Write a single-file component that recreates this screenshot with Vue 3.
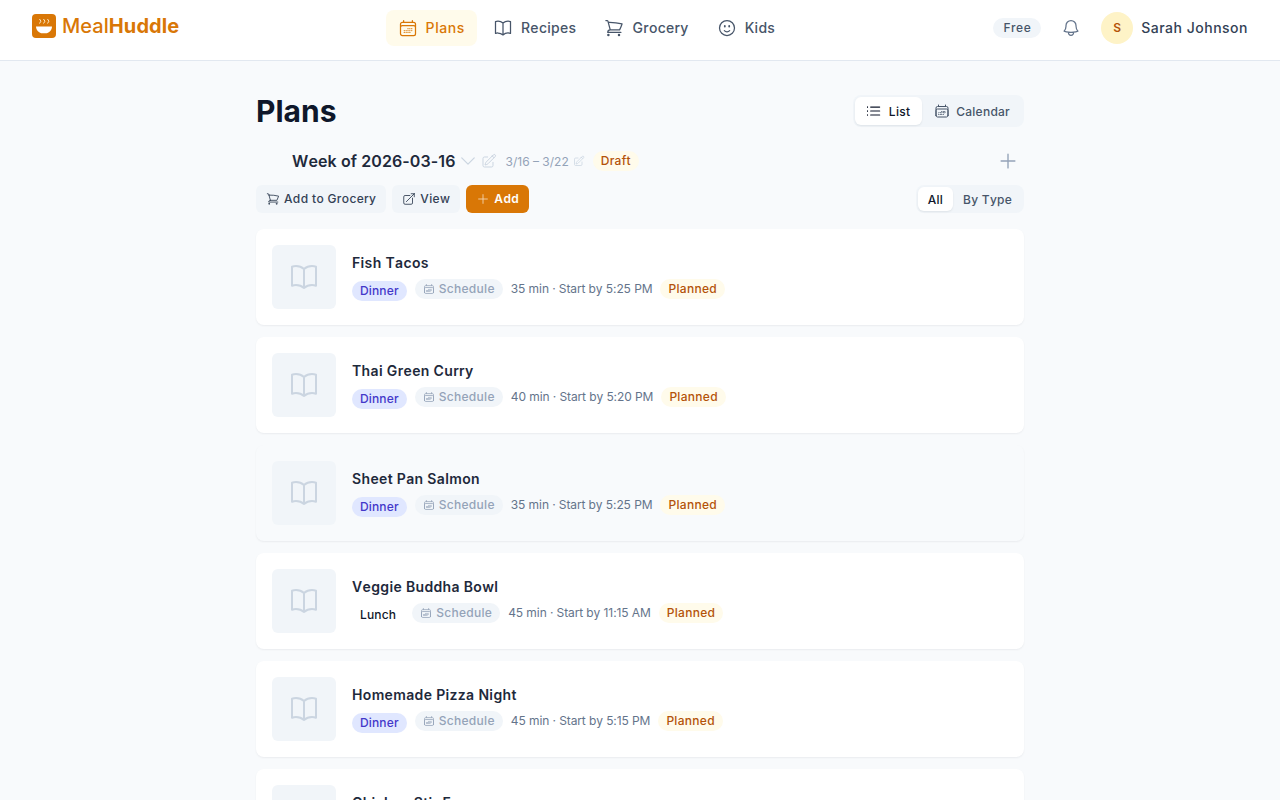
<script setup>
const nav = [
  { label: 'Plans', icon: 'calendar', active: true },
  { label: 'Recipes', icon: 'book' },
  { label: 'Grocery', icon: 'cart' },
  { label: 'Kids', icon: 'smile' }
]

const paths = {
  calendar: 'M6.75 3v2.25M17.25 3v2.25M3 18.75V7.5a2.25 2.25 0 0 1 2.25-2.25h13.5A2.25 2.25 0 0 1 21 7.5v11.25m-18 0A2.25 2.25 0 0 0 5.25 21h13.5A2.25 2.25 0 0 0 21 18.75m-18 0v-7.5A2.25 2.25 0 0 1 5.25 9h13.5A2.25 2.25 0 0 1 21 11.25v7.5m-9-6h.008v.008H12v-.008ZM12 15h.008v.008H12V15Zm0 2.25h.008v.008H12v-.008ZM9.75 15h.008v.008H9.75V15Zm0 2.25h.008v.008H9.75v-.008ZM7.5 15h.008v.008H7.5V15Zm0 2.25h.008v.008H7.5v-.008Zm6.75-4.5h.008v.008h-.008v-.008Zm0 2.25h.008v.008h-.008V15Zm0 2.25h.008v.008h-.008v-.008Zm2.25-4.5h.008v.008H16.5v-.008Zm0 2.25h.008v.008H16.5V15Z',
  book: 'M12 6.042A8.967 8.967 0 0 0 6 3.75c-1.052 0-2.062.18-3 .512v14.25A8.987 8.987 0 0 1 6 18c2.305 0 4.408.867 6 2.292m0-14.25a8.966 8.966 0 0 1 6-2.292c1.052 0 2.062.18 3 .512v14.25A8.987 8.987 0 0 0 18 18a8.967 8.967 0 0 0-6 2.292m0-14.25v14.25',
  cart: 'M2.25 3h1.386c.51 0 .955.343 1.087.835l.383 1.437M7.5 14.25a3 3 0 0 0-3 3h15.75m-12.75-3h11.218c1.121-2.3 2.1-4.684 2.924-7.138a60.114 60.114 0 0 0-16.536-1.84M7.5 14.25 5.106 5.272M6 20.25a.75.75 0 1 1-1.5 0 .75.75 0 0 1 1.5 0Zm12.75 0a.75.75 0 1 1-1.5 0 .75.75 0 0 1 1.5 0Z',
  smile: 'M15.182 15.182a4.5 4.5 0 0 1-6.364 0M21 12a9 9 0 1 1-18 0 9 9 0 0 1 18 0ZM9.75 9.75c0 .414-.168.75-.375.75S9 10.164 9 9.75 9.168 9 9.375 9s.375.336.375.75Zm-.375 0h.008v.015h-.008V9.75Zm5.625 0c0 .414-.168.75-.375.75s-.375-.336-.375-.75.168-.75.375-.75.375.336.375.75Zm-.375 0h.008v.015h-.008V9.75Z',
  bell: 'M14.857 17.082a23.848 23.848 0 0 0 5.454-1.31A8.967 8.967 0 0 1 18 9.75V9A6 6 0 0 0 6 9v.75a8.967 8.967 0 0 1-2.312 6.022c1.733.64 3.56 1.085 5.455 1.31m5.714 0a24.255 24.255 0 0 1-5.714 0m5.714 0a3 3 0 1 1-5.714 0',
  pencil: 'm16.862 4.487 1.687-1.688a1.875 1.875 0 1 1 2.652 2.652L10.582 16.07a4.5 4.5 0 0 1-1.897 1.13L6 18l.8-2.685a4.5 4.5 0 0 1 1.13-1.897l8.932-8.931Zm0 0L19.5 7.125M18 14v4.75A2.25 2.25 0 0 1 15.75 21H5.25A2.25 2.25 0 0 1 3 18.75V8.25A2.25 2.25 0 0 1 5.25 6H10',
  external: 'M13.5 6H5.25A2.25 2.25 0 0 0 3 8.25v10.5A2.25 2.25 0 0 0 5.25 21h10.5A2.25 2.25 0 0 0 18 18.75V10.5m-10.5 6L21 3m0 0h-5.25M21 3v5.25',
  plus: 'M12 4.5v15m7.5-7.5h-15',
  list: 'M8.25 6.75h12M8.25 12h12m-12 5.25h12M3.75 6.75h.007v.008H3.75V6.75Zm.375 0a.375.375 0 1 1-.75 0 .375.375 0 0 1 .75 0ZM3.75 12h.007v.008H3.75V12Zm.375 0a.375.375 0 1 1-.75 0 .375.375 0 0 1 .75 0Zm-.375 5.25h.007v.008H3.75v-.008Zm.375 0a.375.375 0 1 1-.75 0 .375.375 0 0 1 .75 0Z',
  chevron: 'm19.5 8.25-7.5 7.5-7.5-7.5'
}

const meals = [
  { name: 'Fish Tacos', type: 'Dinner', time: '35 min · Start by 5:25 PM' },
  { name: 'Thai Green Curry', type: 'Dinner', time: '40 min · Start by 5:20 PM' },
  { name: 'Sheet Pan Salmon', type: 'Dinner', time: '35 min · Start by 5:25 PM', muted: true },
  { name: 'Veggie Buddha Bowl', type: 'Lunch', time: '45 min · Start by 11:15 AM' },
  { name: 'Homemade Pizza Night', type: 'Dinner', time: '45 min · Start by 5:15 PM' },
  { name: 'Chicken Stir Fry', type: 'Dinner', time: '30 min · Start by 5:30 PM' }
]
</script>

<template>
  <div class="page">
    <header class="topbar">
      <div class="brand">
        <span class="logo">
          <svg viewBox="0 0 24 24" width="24" height="24">
            <path d="M4 12.5h16c0 3.6-3 6.8-6.5 6.8h-3C7 19.3 4 16.1 4 12.5Z" fill="#fff" />
            <path d="M7.5 5l1.4 2.2L7.5 9.5M11.5 5l1.4 2.2-1.4 2.3M15.5 5l1.4 2.2-1.4 2.3" fill="none" stroke="#fde9c4" stroke-width="1" />
          </svg>
        </span>
        <span class="brand-name">Meal<b>Huddle</b></span>
      </div>
      <nav class="nav">
        <a v-for="item in nav" :key="item.label" class="nav-item" :class="{ active: item.active }">
          <svg class="ico i20" viewBox="0 0 24 24"><path :d="paths[item.icon]" /></svg>
          {{ item.label }}
        </a>
      </nav>
      <div class="account">
        <span class="plan">Free</span>
        <svg class="ico i20 bell" viewBox="0 0 24 24"><path :d="paths.bell" /></svg>
        <span class="avatar">S</span>
        <span class="user">Sarah Johnson</span>
      </div>
    </header>

    <main class="content">
      <div class="title-row">
        <h1>Plans</h1>
        <div class="segment view-seg">
          <button class="seg-btn on">
            <svg class="ico i16" viewBox="3.4 1.3 21.3 21.3"><path :d="paths.list" /></svg>List
          </button>
          <button class="seg-btn">
            <svg class="ico i16" viewBox="0 0 24 24"><path :d="paths.calendar" /></svg>Calendar
          </button>
        </div>
      </div>

      <div class="week-row">
        <h2>Week of 2026-03-16</h2>
        <svg class="ico chev" viewBox="0 0 24 24"><path :d="paths.chevron" /></svg>
        <svg class="ico pen" viewBox="0 0 24 24"><path :d="paths.pencil" /></svg>
        <span class="range">3/16 – 3/22</span>
        <svg class="ico pen-sm" viewBox="0 0 24 24"><path :d="paths.pencil" /></svg>
        <span class="pill amber draft">Draft</span>
        <svg class="ico week-add" viewBox="0 0 24 24"><path :d="paths.plus" /></svg>
      </div>

      <div class="action-row">
        <button class="btn">
          <svg class="ico i14" viewBox="0 0 24 24"><path :d="paths.cart" /></svg>Add to Grocery
        </button>
        <button class="btn">
          <svg class="ico i14" viewBox="0 0 24 24"><path :d="paths.external" /></svg>View
        </button>
        <button class="btn primary">
          <svg class="ico i14" viewBox="0 0 24 24"><path :d="paths.plus" /></svg>Add
        </button>
        <div class="segment type-seg">
          <button class="seg-btn on">All</button>
          <button class="seg-btn">By Type</button>
        </div>
      </div>

      <div class="meals">
        <article v-for="meal in meals" :key="meal.name" class="card" :class="{ muted: meal.muted }">
          <div class="thumb">
            <svg class="ico" viewBox="0 0 24 24" width="32" height="32"><path :d="paths.book" /></svg>
          </div>
          <div class="info">
            <h3>{{ meal.name }}</h3>
            <div class="meta">
              <span class="type" :class="meal.type.toLowerCase()">{{ meal.type }}</span>
              <span class="pill schedule">
                <svg class="ico i12" viewBox="0 0 24 24"><path :d="paths.calendar" /></svg>Schedule
              </span>
              <span class="time">{{ meal.time }}</span>
              <span class="pill amber">Planned</span>
            </div>
          </div>
        </article>
      </div>
    </main>
  </div>
</template>

<style>
html, body {
  margin: 0;
  background: #f8fafc;
  overflow: hidden;
}
</style>

<style scoped>
* {
  box-sizing: border-box;
}

.page {
  height: 800px;
  overflow: hidden;
  font-family: Inter, "Liberation Sans", sans-serif;
  font-kerning: none;
  color: #0f172a;
  background: #f8fafc;
}

.ico {
  display: block;
  flex: none;
  fill: none;
  stroke: currentColor;
  stroke-width: 1.5;
  stroke-linecap: round;
  stroke-linejoin: round;
}
.i20 { width: 20px; height: 20px; }
.i16 { width: 16px; height: 16px; }
.i14 { width: 14px; height: 14px; }
.i12 { width: 12px; height: 12px; }

.topbar {
  height: 61px;
  padding: 0 32px 5px;
  display: flex;
  justify-content: space-between;
  align-items: center;
  background: #fff;
  border-bottom: 1px solid #e2e8f0;
}

.brand {
  display: flex;
  align-items: center;
  gap: 6px;
  margin-top: -4px;
}
.logo {
  width: 24px;
  height: 24px;
  border-radius: 4px;
  background: #d97706;
}
.brand-name {
  font-size: 20px;
  line-height: 28px;
  font-weight: 500;
  letter-spacing: 0.1px;
  color: #d97706;
}
.brand-name b {
  font-weight: 700;
}

.nav {
  display: flex;
  gap: 4px;
}
.nav-item {
  height: 36px;
  padding: 0 12px;
  display: flex;
  align-items: center;
  gap: 8px;
  border-radius: 8px;
  font-size: 14px;
  font-weight: 500;
  letter-spacing: 0.3px;
  color: #475569;
}
.nav-item.active {
  background: #fffbeb;
  color: #d97706;
  letter-spacing: 0.6px;
}

.account {
  display: flex;
  align-items: center;
  justify-content: flex-end;
}
.plan {
  padding: 0 10px;
  height: 20px;
  line-height: 20px;
  border-radius: 10px;
  background: #f1f5f9;
  font-size: 12px;
  font-weight: 500;
  letter-spacing: 0.5px;
  color: #475569;
}
.bell {
  margin-left: 20px;
  color: #64748b;
}
.avatar {
  margin-left: 20px;
  width: 32px;
  height: 32px;
  border-radius: 50%;
  background: #fef3c7;
  color: #b45309;
  font-size: 12px;
  font-weight: 600;
  display: flex;
  align-items: center;
  justify-content: center;
}
.user {
  margin-left: 8px;
  font-size: 14px;
  font-weight: 500;
  letter-spacing: 0.5px;
  color: #334155;
}

.content {
  width: 768px;
  margin: 0 auto;
  padding-top: 32px;
}

.title-row {
  display: flex;
  align-items: center;
  justify-content: space-between;
  height: 36px;
}
h1 {
  margin: 0;
  font-size: 30px;
  line-height: 36px;
  font-weight: 700;
}

.segment {
  display: flex;
  padding: 2px;
  border-radius: 8px;
  background: #f1f5f9;
}
.seg-btn {
  border: 0;
  background: none;
  font: inherit;
  font-size: 12px;
  font-weight: 500;
  letter-spacing: 0.25px;
  color: #475569;
  display: flex;
  align-items: center;
  border-radius: 6px;
}
.seg-btn.on {
  background: #fff;
  color: #0f172a;
  box-shadow: 0 1px 2px rgba(15, 23, 42, 0.08);
}
.view-seg .seg-btn {
  height: 28px;
  padding: 0 12px;
  gap: 6px;
}
.type-seg {
  margin-left: auto;
}
.type-seg .seg-btn {
  height: 24px;
  padding: 0 10px;
}

.week-row {
  margin-top: 20px;
  height: 24px;
  padding-left: 36px;
  display: flex;
  align-items: center;
}
h2 {
  margin: 0;
  font-size: 16px;
  line-height: 24px;
  font-weight: 600;
  letter-spacing: 0.1px;
  color: #1e293b;
}
.chev {
  width: 20px;
  height: 20px;
  margin-left: 2px;
  color: #cbd5e1;
}
.pen {
  width: 16px;
  height: 16px;
  margin-left: 3px;
  color: #cbd5e1;
}
.range {
  margin-left: 9px;
  font-size: 12px;
  color: #94a3b8;
}
.pen-sm {
  width: 12px;
  height: 12px;
  margin-left: 4px;
  color: #cbd5e1;
}
.week-add {
  width: 22px;
  height: 22px;
  margin-left: auto;
  margin-right: 5px;
  color: #94a3b8;
}

.pill {
  height: 20px;
  line-height: 20px;
  padding: 0 8px;
  border-radius: 10px;
  font-size: 12px;
  font-weight: 500;
  letter-spacing: 0.3px;
}
.amber {
  background: #fffbeb;
  color: #b45309;
}
.draft {
  margin-left: 8px;
}

.action-row {
  margin-top: 12px;
  display: flex;
  align-items: center;
  gap: 6px;
}
.btn {
  height: 28px;
  padding: 0 10px 1px;
  display: flex;
  align-items: center;
  gap: 4px;
  border: 0;
  border-radius: 6px;
  background: #f1f5f9;
  font: inherit;
  font-size: 12px;
  font-weight: 500;
  letter-spacing: 0.35px;
  color: #334155;
}
.btn.primary {
  background: #d97706;
  color: #fff;
  font-weight: 600;
}
.btn.primary .ico {
  opacity: 0.7;
}

.meals {
  margin-top: 16px;
  display: flex;
  flex-direction: column;
  gap: 12px;
}
.card {
  height: 96px;
  padding: 16px;
  display: flex;
  align-items: center;
  gap: 16px;
  background: #fff;
  border-radius: 8px;
  box-shadow: 0 1px 2px rgba(15, 23, 42, 0.06);
}
.card.muted {
  background: #f8fafc;
}
.thumb {
  width: 64px;
  height: 64px;
  flex: none;
  display: flex;
  align-items: center;
  justify-content: center;
  border-radius: 6px;
  background: #f1f5f9;
  color: #cbd5e1;
}
h3 {
  margin: 0 0 6px;
  font-size: 14px;
  line-height: 20px;
  font-weight: 600;
  letter-spacing: 0.35px;
  color: #1e293b;
}
.meta {
  display: flex;
  align-items: flex-start;
  gap: 8px;
  font-size: 12px;
}
.type {
  margin-top: 2px;
  height: 20px;
  line-height: 20px;
  padding: 0 8px;
  border-radius: 10px;
  font-weight: 500;
  letter-spacing: 0.15px;
}
.type.dinner {
  background: #e0e7ff;
  color: #4338ca;
}
.type.lunch {
  color: #0f172a;
}
.schedule {
  display: flex;
  align-items: center;
  gap: 4px;
  background: #f1f5f9;
  color: #94a3b8;
}
.time {
  line-height: 20px;
  letter-spacing: -0.08px;
  color: #64748b;
}
</style>
